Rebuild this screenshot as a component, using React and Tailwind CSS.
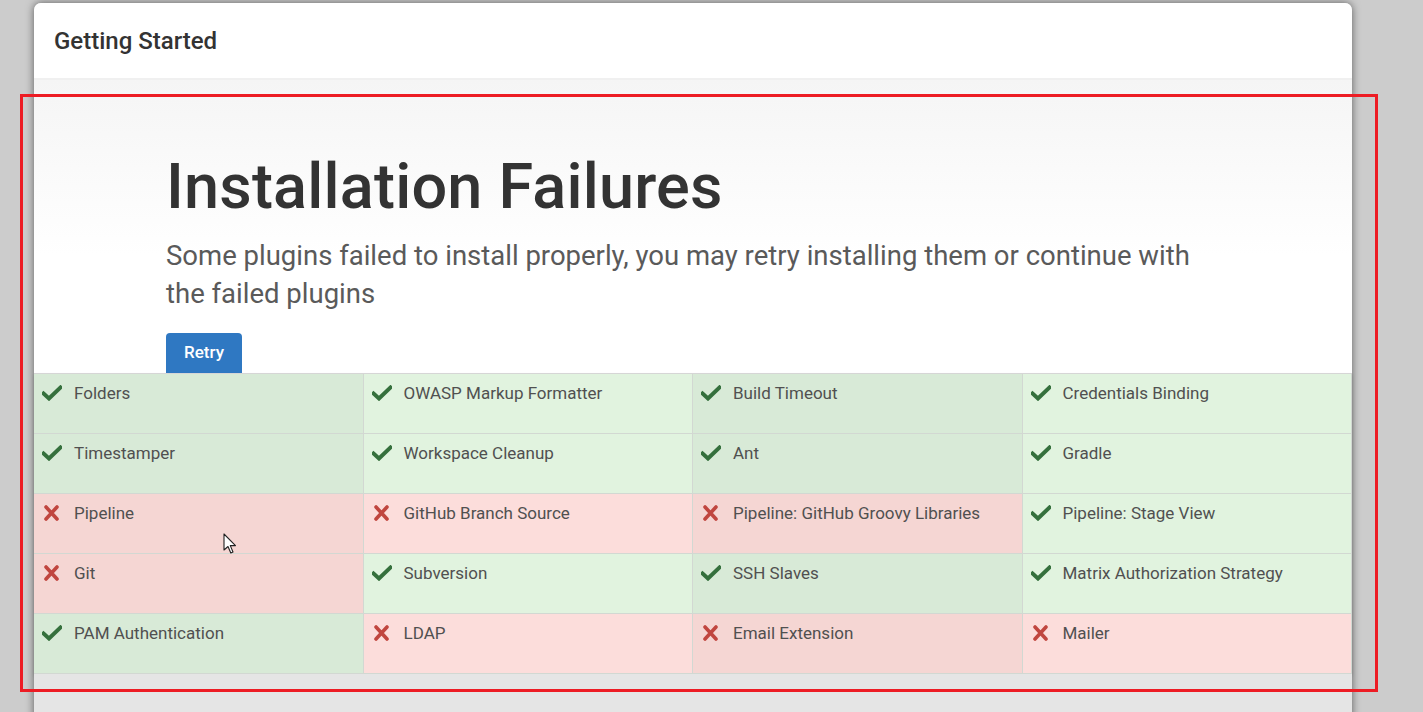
import React from "react";

const plugins = [
  ["Folders", true], ["OWASP Markup Formatter", true], ["Build Timeout", true], ["Credentials Binding", true],
  ["Timestamper", true], ["Workspace Cleanup", true], ["Ant", true], ["Gradle", true],
  ["Pipeline", false], ["GitHub Branch Source", false], ["Pipeline: GitHub Groovy Libraries", false], ["Pipeline: Stage View", true],
  ["Git", false], ["Subversion", true], ["SSH Slaves", true], ["Matrix Authorization Strategy", true],
  ["PAM Authentication", true], ["LDAP", false], ["Email Extension", false], ["Mailer", false],
];

function Check() {
  return (
    <svg width="20" height="16" viewBox="0 0 20 16" className="shrink-0">
      <path d="M1.5 8.5 L7 13.5 L18.5 2.5" fill="none" stroke="#35703d" strokeWidth="4" strokeLinecap="square" strokeLinejoin="miter" />
    </svg>
  );
}

function Cross() {
  return (
    <svg width="20" height="16" viewBox="0 0 20 16" className="shrink-0">
      <path d="M4 2 L15 14 M15 2 L4 14" fill="none" stroke="#c0463f" strokeWidth="3.6" strokeLinecap="round" />
    </svg>
  );
}

function Cell({ name, ok, dark }) {
  let bg;
  if (ok) bg = dark ? "bg-[#d8ead7]" : "bg-[#e1f3df]";
  else bg = dark ? "bg-[#f5d6d3]" : "bg-[#fcdddb]";
  return (
    <div className={`${bg} h-[60px] border-r border-b border-[#d2d8d2] flex items-start pt-[7px] pl-[8px]`}>
      <div className="h-[24px] flex items-center">
        {ok ? <Check /> : <Cross />}
      </div>
      <span className="ml-[12px] text-[17px] leading-[24px] text-[#505050]">{name}</span>
    </div>
  );
}

export default function App() {
  return (
    <div className="relative min-h-[712px] h-[712px] overflow-hidden bg-[#cccccc] font-['Roboto',sans-serif]">
      <div className="ml-[34px] mt-[3px] w-[1318px] h-[720px] bg-[#e5e5e5] rounded-t-[7px] shadow-[0_0_9px_rgba(0,0,0,0.55)] flex flex-col">
        <div className="h-[77px] bg-white rounded-t-[7px] border-b-2 border-[#f0f0f0] flex items-center px-[20px]">
          <span className="text-[24px] font-medium text-[#333333]">Getting Started</span>
        </div>
        <div className="bg-gradient-to-b from-[#f5f5f5] via-white via-60% to-white pl-[132px] pt-[72px]">
          <h1 className="text-[63px] leading-[69px] font-medium text-[#333333] tracking-[0.2px]">Installation Failures</h1>
          <p className="mt-[16px] text-[27.5px] leading-[38px] font-normal text-[#5a5a5a] w-[1050px]">
            Some plugins failed to install properly, you may retry installing them or continue with the failed plugins
          </p>
          <button className="mt-[20px] h-[40px] w-[76px] rounded-t-[4px] bg-[#2f78c2] text-white text-[17px] font-medium">Retry</button>
        </div>
        <div className="grid grid-cols-4 border-t border-[#d6d6d6] shadow-[0_2px_3px_rgba(0,0,0,0.12)]">
          {plugins.map(([name, ok], i) => (
            <Cell key={name} name={name} ok={ok} dark={i % 4 === 0 || i % 4 === 2} />
          ))}
        </div>
        <div className="flex-1 bg-[#e5e5e5]" />
      </div>

      <div className="absolute left-[20px] top-[94px] w-[1358px] h-[598px] border-[3px] border-[#ed1c24] pointer-events-none" />

      <svg className="absolute left-[223px] top-[533px]" width="14" height="22" viewBox="0 0 14 22">
        <path d="M1 1 L1 17 L5 13.5 L7.8 20 L10 19 L7.3 12.6 L12.5 12.6 Z" fill="#ffffff" stroke="#222222" strokeWidth="1.1" strokeLinejoin="round" />
      </svg>
    </div>
  );
}
